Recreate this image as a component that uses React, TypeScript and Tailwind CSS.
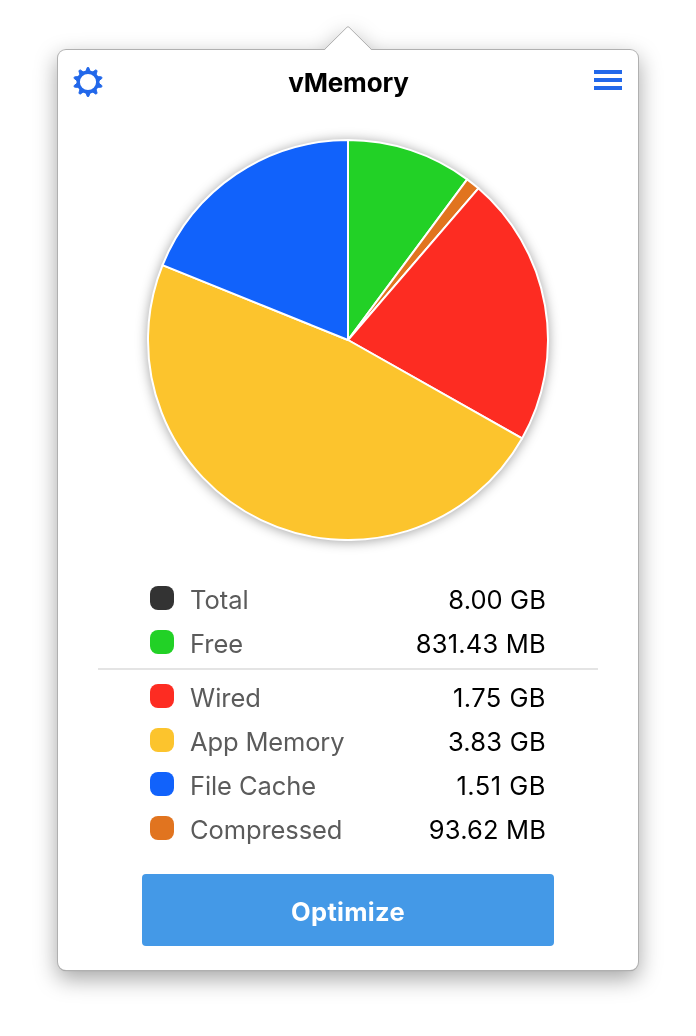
type Entry = {
  label: string;
  value: string;
  swatch: string;
  labelTracking: string;
  valueTracking: string;
};

const summary: Entry[] = [
  { label: "Total", value: "8.00 GB", swatch: "bg-[#333333]", labelTracking: "tracking-[0px]", valueTracking: "tracking-[0.1px]" },
  { label: "Free", value: "831.43 MB", swatch: "bg-[#22d126]", labelTracking: "tracking-[0px]", valueTracking: "tracking-[0.2px]" },
];

const details: Entry[] = [
  { label: "Wired", value: "1.75 GB", swatch: "bg-[#fd2c22]", labelTracking: "tracking-[0px]", valueTracking: "tracking-[0.45px]" },
  { label: "App Memory", value: "3.83 GB", swatch: "bg-[#fcc42d]", labelTracking: "tracking-[-0.15px]", valueTracking: "tracking-[0.25px]" },
  { label: "File Cache", value: "1.51 GB", swatch: "bg-[#1162fb]", labelTracking: "tracking-[-0.1px]", valueTracking: "tracking-[0.5px]" },
  { label: "Compressed", value: "93.62 MB", swatch: "bg-[#e1741f]", labelTracking: "tracking-[-0.1px]", valueTracking: "tracking-[0.15px]" },
];

const slices = [
  { mb: 831.43, color: "#22d126" },
  { mb: 93.62, color: "#e1741f" },
  { mb: 1.75 * 1024, color: "#fd2c22" },
  { mb: 3.83 * 1024, color: "#fcc42d" },
  { mb: 1.51 * 1024, color: "#1162fb" },
];

function Pie() {
  const total = slices.reduce((sum, s) => sum + s.mb, 0);
  const point = (a: number) => `${210 + 200 * Math.sin(a)} ${210 - 200 * Math.cos(a)}`;
  let angle = 0;
  return (
    <svg width="420" height="420" viewBox="0 0 420 420" className="block overflow-visible drop-shadow-[0_1px_6px_rgba(0,0,0,0.36)]">
      {slices.map((s) => {
        const start = angle;
        angle += (s.mb / total) * Math.PI * 2;
        const large = angle - start > Math.PI ? 1 : 0;
        return (
          <path
            key={s.color}
            d={`M210 210L${point(start)}A200 200 0 ${large} 1 ${point(angle)}Z`}
            fill={s.color}
            stroke="#fff"
            strokeWidth="2"
            strokeLinejoin="round"
          />
        );
      })}
    </svg>
  );
}

function Gear() {
  return (
    <svg width="32" height="32" viewBox="-16 -16 32 32" className="block" stroke="#2268ea" fill="#2268ea">
      <circle r="9.8" strokeWidth="3.4" fill="none" />
      {Array.from({ length: 10 }, (_, i) => (
        <path key={i} d="M-2.1 -10.8L-1.2 -13.4Q-1.2 -14.6 0 -14.6Q1.2 -14.6 1.2 -13.4L2.1 -10.8Z" strokeWidth="0.9" strokeLinejoin="round" transform={`rotate(${i * 36})`} />
      ))}
    </svg>
  );
}

function Row({ entry }: { entry: Entry }) {
  return (
    <div className="flex h-11 items-center text-[25.5px] leading-none">
      <span className={`mb-1 size-6 shrink-0 rounded-[8px] ${entry.swatch}`} />
      <span className={`ml-[16px] whitespace-nowrap text-[#5b5b5b] ${entry.labelTracking}`}>{entry.label}</span>
      <span className={`ml-auto whitespace-nowrap text-black ${entry.valueTracking}`}>{entry.value}</span>
    </div>
  );
}

export default function App() {
  return (
    <div className="h-[1036px] w-[696px] overflow-hidden bg-white pl-[58px] pt-[50px] font-['Inter',sans-serif]">
      <main className="relative flex h-[920px] w-[580px] flex-col rounded-[8px] bg-white shadow-[0_0_0_1px_#b0b0b0,0_1px_1px_rgba(0,0,0,0.3)] [filter:drop-shadow(0_8px_11px_rgba(0,0,0,0.35))]">
        <svg width="50" height="26" viewBox="0 0 50 26" className="absolute left-[265px] top-[-24px]">
          <path d="M1.5 24L24 1.5Q25 0.5 26 1.5L48.5 24V26H1.5Z" fill="#fff" />
          <path d="M1.5 23.5L24 1.2Q25 0.3 26 1.2L48.5 23.5" fill="none" stroke="#b0b0b0" />
        </svg>
        <header className="flex h-16 items-center justify-between px-[14px]">
          <button aria-label="Settings">
            <Gear />
          </button>
          <h1 className="mr-[1px] pt-[2px] text-[26px] font-bold leading-none tracking-[-0.2px] text-black">vMemory</h1>
          <button aria-label="Menu" className="mb-1 mr-[2px] flex w-7 flex-col gap-1">
            <span className="h-1 bg-[#2268ea]" />
            <span className="h-1 bg-[#2268ea]" />
            <span className="h-1 bg-[#2268ea]" />
          </button>
        </header>
        <div className="mt-4 flex justify-center">
          <Pie />
        </div>
        <section className="mt-[28px] px-10">
          <div className="px-[52px]">
            {summary.map((e) => (
              <Row key={e.label} entry={e} />
            ))}
          </div>
          <div className="mb-[6px] mt-[2px] h-[2px] bg-[#e4e4e4]" />
          <div className="px-[52px]">
            {details.map((e) => (
              <Row key={e.label} entry={e} />
            ))}
          </div>
        </section>
        <button className="mx-auto mt-[22px] flex h-[72px] w-[412px] items-center justify-center rounded-[4px] bg-[#4499e7] pt-[4px] text-[25.5px] font-bold leading-none tracking-[0.3px] text-white">
          Optimize
        </button>
      </main>
    </div>
  );
}
